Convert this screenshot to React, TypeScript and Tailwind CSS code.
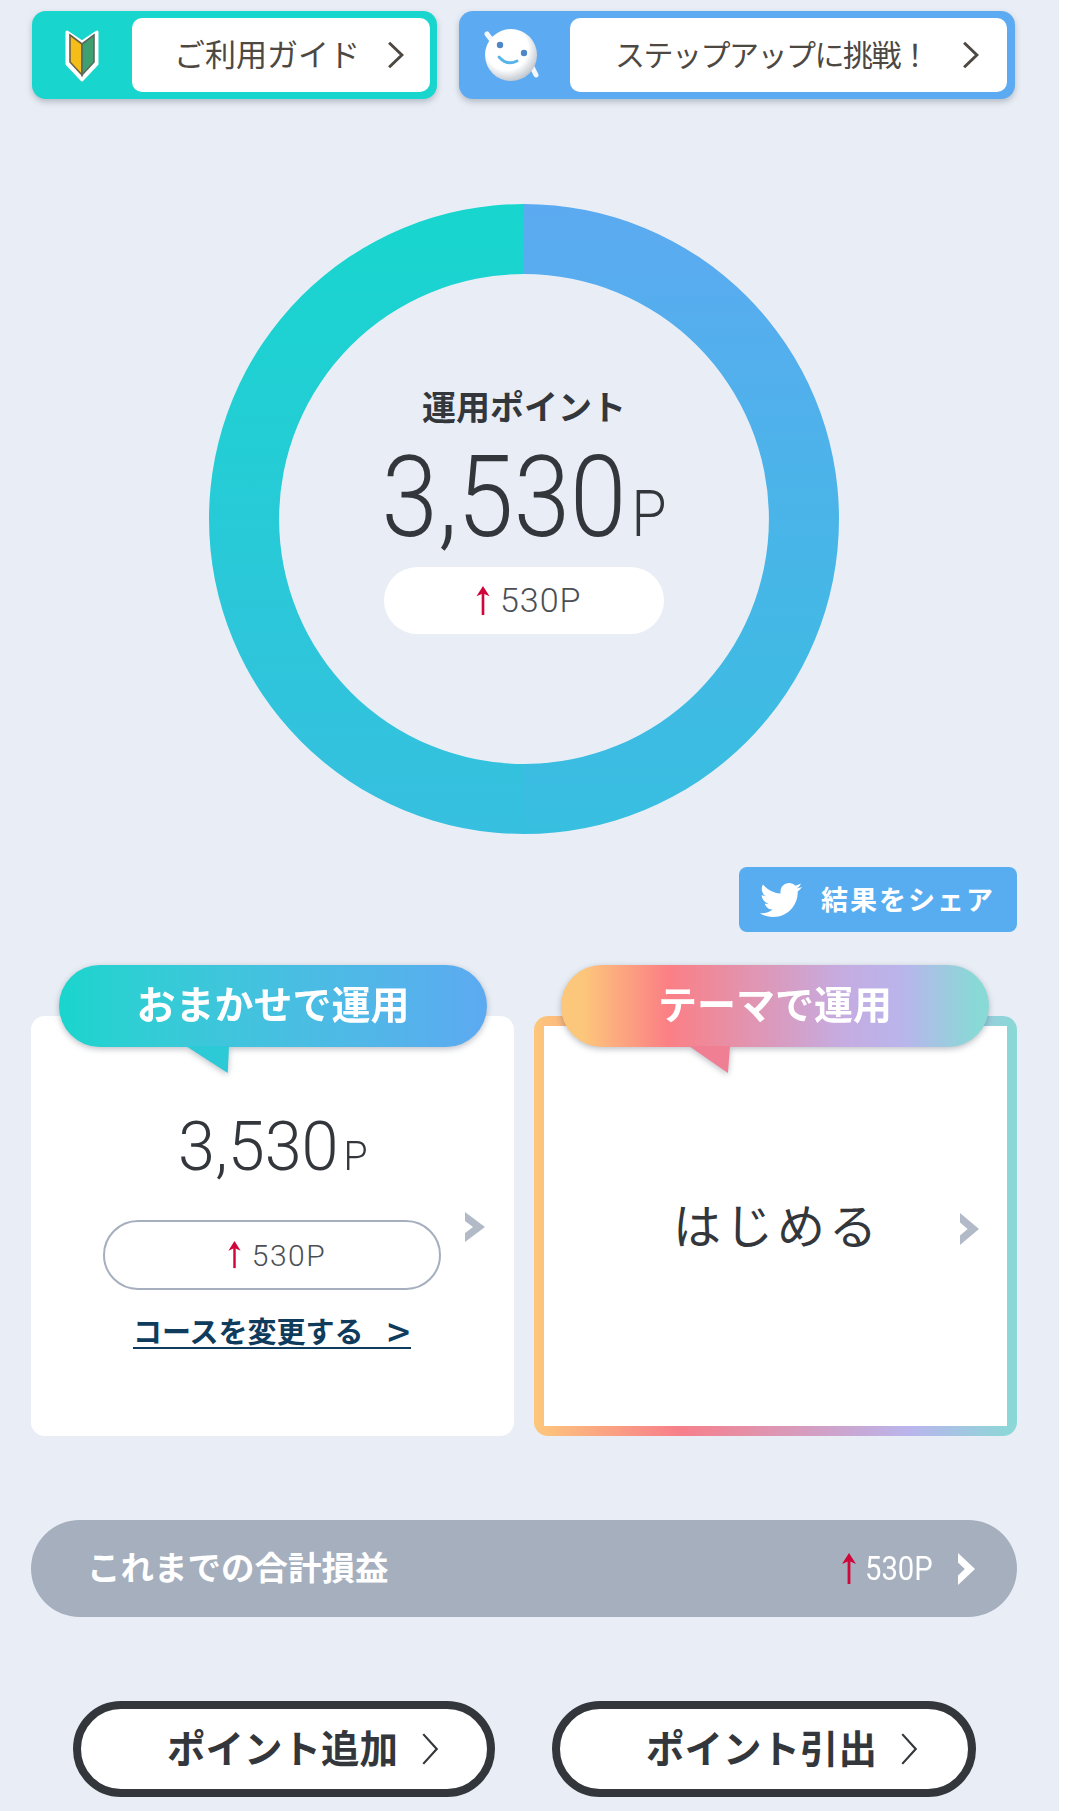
import { FaTwitter } from 'react-icons/fa';

const jp = "font-['Noto_Sans_CJK_JP','Noto_Sans',sans-serif]";
const din = "font-['Roboto','Noto_Sans_CJK_JP',sans-serif]";

function Chevron({ className, weight }: { className: string; weight: number }) {
  return (
    <svg viewBox="0 0 16 24" fill="none" preserveAspectRatio="none" className={className}>
      <path d="M2 1.5 L14 12 L2 22.5" stroke="currentColor" strokeWidth={weight} vectorEffect="non-scaling-stroke" />
    </svg>
  );
}

function FatChevron({ className }: { className: string }) {
  return (
    <svg viewBox="0 0 20 30" preserveAspectRatio="none" className={className}>
      <path d="M0 0 L20 15 L0 30 L0 21 L8 15 L0 9 Z" fill="currentColor" />
    </svg>
  );
}

function UpArrow({ className }: { className: string }) {
  return (
    <svg viewBox="0 0 16 32" fill="none" className={className}>
      <path d="M8 31 L8 4" stroke="#d0063a" strokeWidth="2.8" />
      <path d="M8 0 L15 11 L8 8 L1 11 Z" fill="#d0063a" />
    </svg>
  );
}

function BeginnerMark() {
  return (
    <svg viewBox="0 0 34 54" className="w-[34px] h-[54px]">
      <path d="M2 4 L17 14 L32 4 L32 36 L17 52 L2 36 Z" fill="#fff" stroke="#fff" strokeWidth="3" strokeLinejoin="round" />
      <path d="M5 7 L17 16 L17 47 L5 34 Z" fill="#f4bd18" stroke="#6b5f45" strokeWidth="1.6" />
      <path d="M29 7 L17 16 L17 47 L29 34 Z" fill="#3ea070" stroke="#5a6a5c" strokeWidth="1.6" />
    </svg>
  );
}

function Mascot() {
  return (
    <svg viewBox="0 0 64 64" className="w-[64px] h-[64px]">
      <defs>
        <radialGradient id="mascotBody" cx="0.42" cy="0.38" r="0.68">
          <stop offset="0.6" stopColor="#ffffff" />
          <stop offset="1" stopColor="#b4bcc6" />
        </radialGradient>
      </defs>
      <path d="M8 11 L14 19" stroke="#f4f8fc" strokeWidth="5" strokeLinecap="round" />
      <path d="M53 44 L57 52" stroke="#f4f8fc" strokeWidth="5" strokeLinecap="round" />
      <circle cx="32" cy="32" r="26" fill="url(#mascotBody)" />
      <circle cx="21" cy="22" r="3.2" fill="#4e86c8" />
      <circle cx="45" cy="30" r="3.2" fill="#4e86c8" />
      <path d="M20 34 Q28 43 38 38" fill="none" stroke="#58b4ea" strokeWidth="2.8" strokeLinecap="round" />
    </svg>
  );
}

function Ring() {
  return (
    <svg viewBox="0 0 630 630" className="w-[630px] h-[630px] [grid-area:1/1]">
      <defs>
        <linearGradient id="ringLeft" x1="0" y1="0" x2="0" y2="1">
          <stop offset="0" stopColor="#17d6ce" />
          <stop offset="1" stopColor="#37bfe0" />
        </linearGradient>
        <linearGradient id="ringRight" x1="0" y1="0" x2="0" y2="1">
          <stop offset="0" stopColor="#5caaf1" />
          <stop offset="1" stopColor="#37bfe0" />
        </linearGradient>
      </defs>
      <path d="M315 0 A315 315 0 0 0 315 630 L315 560 A245 245 0 0 1 315 70 Z" fill="url(#ringLeft)" />
      <path d="M315 0 A315 315 0 0 1 315 630 L315 560 A245 245 0 0 0 315 70 Z" fill="url(#ringRight)" />
    </svg>
  );
}

function Bubble({ label, gradient, left, tail }: { label: string; gradient: string; left: string; tail: string }) {
  return (
    <div className={`absolute top-[-51px] ${left} w-[428px] h-[82px] rounded-full drop-shadow-[0_2px_3px_rgba(60,70,90,0.35)]`}>
      <div className={`absolute inset-0 rounded-full ${gradient}`} />
      <div className={`absolute top-[81px] ${tail}`} />
      <div className="relative h-full flex items-center justify-center pb-[8px] text-white text-[39px] font-bold">{label}</div>
    </div>
  );
}

function PillButton({ label, width }: { label: string; width: string }) {
  return (
    <button className={`${width} h-[96px] rounded-full border-[8px] border-[#33373c] bg-white flex items-center pl-[86px] text-[38.5px] font-bold text-[#33373c]`}>
      <span className="pb-[4px]">{label}</span>
      <Chevron className="w-[18px] h-[34px] ml-[23px] text-[#33373c]" weight={2.2} />
    </button>
  );
}

export default function App() {
  return (
    <div className={`h-[1811px] overflow-hidden bg-white ${jp}`}>
      <div className="w-[1059px] h-full bg-[#e9eef6] pt-[11px]">
        {/* top guide buttons */}
        <div className="flex gap-[22px] pl-[32px]">
          <div className="w-[405px] h-[88px] rounded-[14px] bg-[#18d5cd] shadow-[0_3px_6px_rgba(60,70,90,0.3)] flex items-center pl-[33px] pr-[7px]">
            <BeginnerMark />
            <div className="ml-[33px] flex-1 h-[74px] rounded-[10px] bg-white flex items-center pl-[42px] text-[31px] text-[#4d4842]">
              <span className="pb-[4px]">ご利用ガイド</span>
              <Chevron className="w-[17px] h-[28px] ml-[27px] text-[#4d4842]" weight={3} />
            </div>
          </div>
          <div className="w-[556px] h-[88px] rounded-[14px] bg-[#5caaf1] shadow-[0_3px_6px_rgba(60,70,90,0.3)] flex items-center pl-[20px] pr-[8px]">
            <Mascot />
            <div className="ml-[27px] flex-1 h-[74px] rounded-[10px] bg-white flex items-center pl-[45px] text-[30px] tracking-[-1.5px] text-[#4d4842]">
              <span className="pb-[4px]">ステップアップに挑戦！</span>
              <Chevron className="w-[17px] h-[28px] ml-[33px] text-[#4d4842]" weight={3} />
            </div>
          </div>
        </div>

        {/* donut */}
        <div className="mt-[105px] ml-[209px] w-[630px] grid place-items-center">
          <Ring />
          <div className="[grid-area:1/1] self-start mt-[177px] flex flex-col items-center text-[#33373c]">
            <div className="text-[34px] font-bold leading-[50px]">運用ポイント</div>
            <div className={`${din} font-light leading-[108px] mt-[12px] whitespace-nowrap scale-x-[0.89]`}>
              <span className="text-[114px]">3,530</span>
              <span className="text-[64px] ml-[6px]">P</span>
            </div>
            <div className="mt-[-18px] w-[280px] h-[67px] rounded-full bg-white flex items-center justify-center pl-[3px]">
              <UpArrow className="w-[16px] h-[30px] mr-[9px]" />
              <span className={`${din} font-light text-[34px] tracking-[1px] text-[#4b4f54] w-[76px] whitespace-nowrap`}>530P</span>
            </div>
          </div>
        </div>

        {/* share */}
        <div className="mt-[33px] flex justify-end pr-[42px]">
          <div className="w-[278px] h-[65px] rounded-[8px] bg-[#58adf1] flex items-center pl-[21px] text-white text-[27px] font-bold">
            <FaTwitter className="w-[42px] h-[42px]" />
            <span className="ml-[19px] tracking-[2px]">結果をシェア</span>
          </div>
        </div>

        {/* course cards */}
        <div className="mt-[84px] pl-[31px] flex gap-[20px]">
          <div className="relative w-[483px] h-[420px] rounded-[14px] bg-white">
            <Bubble label="おまかせで運用" gradient="bg-gradient-to-r from-[#18d5cd] to-[#5caaf1]" left="left-[28px]" tail="left-[127px] w-[43px] h-[27px] bg-[#2cc9d6] [clip-path:polygon(0_0,100%_0,97%_100%)]" />
            <div className="pt-[94px] flex flex-col items-center text-[#33373c]">
              <div className={`${din} font-light leading-[74px] whitespace-nowrap scale-x-[0.98]`}>
                <span className="text-[68px]">3,530</span>
                <span className="text-[40px] ml-[5px]">P</span>
              </div>
            </div>
            <div className="mt-[18px] ml-[72px] flex items-center">
              <div className="w-[338px] h-[70px] rounded-full border-2 border-[#a5afbe] flex items-center justify-center pl-[9px]">
                <UpArrow className="w-[15px] h-[28px] mr-[10px]" />
                <span className={`${din} font-light text-[30px] tracking-[1.5px] text-[#4b4f54]`}>530P</span>
              </div>
              <FatChevron className="w-[20px] h-[30px] ml-[24px] mt-[-56px] text-[#b2bac7]" />
            </div>
            <div className="mt-[23px] ml-[102px] w-[278px] flex items-center justify-between border-b-2 border-[#0f3c5c] text-[#0f3c5c] text-[29px] font-bold leading-[34px] whitespace-nowrap">
              <span>コースを変更する</span>
              <span className="text-[40px] font-medium leading-[34px] pr-[1px]">&gt;</span>
            </div>
          </div>

          <div className="relative w-[483px] h-[420px] rounded-[14px] p-[10px] bg-[linear-gradient(90deg,#fdc77b_0%,#f77f8a_30%,#b9b5ec_78%,#89d9d6_100%)]">
            <div className="h-full bg-white flex items-center pl-[129px] text-[#33373c] text-[48px] tracking-[4px]">
              <span className="pb-[6px]">はじめる</span>
              <FatChevron className="w-[19px] h-[32px] ml-[79px] mt-[6px] text-[#b2bac7]" />
            </div>
            <Bubble label="テーマで運用" gradient="bg-[linear-gradient(90deg,#fdc77b_5%,#fb7f85_25%,#c6abe0_65%,#b9b5ec_80%,#89d9d6_97%)]" left="left-[27px]" tail="left-[128px] w-[41px] h-[27px] bg-[#f07f94] [clip-path:polygon(0_0,100%_0,95%_100%)]" />
          </div>
        </div>

        {/* total */}
        <div className="mt-[84px] ml-[31px] w-[986px] h-[97px] rounded-full bg-[#a5afbe] flex items-center pl-[56px] text-white">
          <span className="text-[33.5px] font-bold pb-[4px]">これまでの合計損益</span>
          <UpArrow className="w-[16px] h-[34px] ml-[452px]" />
          <span className={`${din} text-[34px] ml-[8px] w-[68px] whitespace-nowrap scale-x-[0.86] origin-left`}>530P</span>
          <FatChevron className="w-[17px] h-[32px] ml-[25px] text-white" />
        </div>

        {/* add / withdraw */}
        <div className="mt-[84px] pl-[73px] flex gap-[57px]">
          <PillButton label="ポイント追加" width="w-[422px]" />
          <PillButton label="ポイント引出" width="w-[424px]" />
        </div>
      </div>
    </div>
  );
}
